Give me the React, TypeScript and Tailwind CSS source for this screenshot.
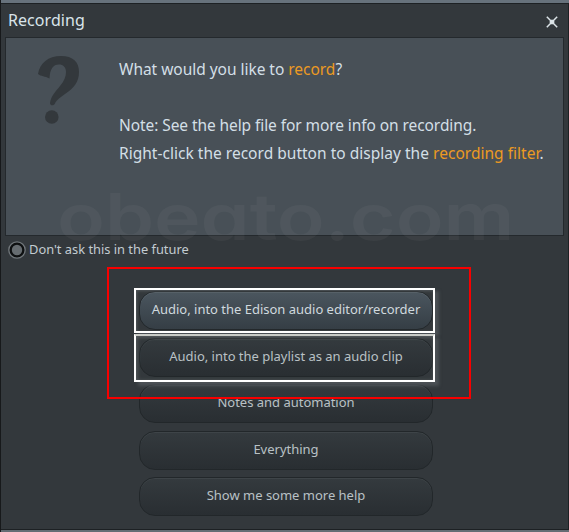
import React from "react";

const buttonBase =
  "flex h-[39px] w-[294px] shrink-0 items-center justify-center rounded-[16px] border border-[#22272a] text-[13px] leading-none";
const activeButton =
  "bg-linear-to-b from-[#4b565f] to-[#353e45] shadow-[inset_0_1px_0_#59636b] text-[#d0d9de]";
const darkButton =
  "bg-linear-to-b from-[#343a3e] to-[#292e32] shadow-[inset_0_1px_0_#3e4448] text-[#b9c1c5]";

function ActionButton({ label, active = false }: { label: string; active?: boolean }) {
  return (
    <button className={`${buttonBase} ${active ? activeButton : darkButton}`}>
      <span className="pb-[2px] tracking-[-0.01px] whitespace-nowrap">{label}</span>
    </button>
  );
}

export default function App() {
  return (
    <div className="relative flex h-[532px] w-[569px] flex-col overflow-hidden border-l border-[#17191b] bg-[#33383c] font-['Noto_Sans','Open_Sans',sans-serif]">
      <div className="h-[3px] shrink-0 bg-[#67727c]" />
      <div className="flex h-[527px] shrink-0 flex-col border-t border-r border-b border-[#1d2124]">
        <header className="flex h-[33px] shrink-0 items-center justify-between pr-[10px] pl-[7px] text-[#d9e4ea]">
          <h1 className="pb-[2px] text-[16px] leading-none tracking-[0.06px]">Recording</h1>
          <svg width="12" height="12" viewBox="0 0 12 12" className="mt-[2px]" aria-label="Close">
            <path d="M0.8 0.8 11.2 11.2M11.2 0.8 0.8 11.2" stroke="#dce4e8" strokeWidth="1.5" />
            <path d="M6 3.2 8.8 6 6 8.8 3.2 6Z" fill="#dce4e8" />
          </svg>
        </header>
        <section className="mr-[4px] ml-[4px] flex h-[199px] shrink-0 border border-[#24292d] bg-[#485057]">
          <div className="w-[113px] shrink-0 pt-[17px] pl-[31px]">
            <svg width="44" height="70" viewBox="0 0 44 70" aria-hidden="true">
              <path d="M1 19C3 8 11 1 24 1 36 1 42 7 42 17 42 27 37 33 28 39 21 44 19 46 18 48.5 17 51 13 51 13 48 14 41 19 36 23 31 27 26 29 22 29 17 29 12 26 9.500 22 9.500 16 9.500 13 14 12.500 23.500 8 21 4 21.500 1 19Z" fill="#33383c" />
              <ellipse cx="14.800" cy="62" rx="6.800" ry="6.800" fill="#33383c" />
            </svg>
          </div>
          <div className="pt-[17px] text-[15.5px] leading-[28px] whitespace-nowrap text-[#d3dfe6]">
            <p className="tracking-[-0.03px]">What would you like to <span className="text-[#ec9a22]">record</span>?</p>
            <p className="mt-[28px] tracking-[-0.08px]">Note: See the help file for more info on recording.</p>
            <p className="tracking-[0.02px]">Right-click the record button to display the <span className="text-[#ec9a22]">recording filter</span>.</p>
          </div>
        </section>
        <label className="mt-[4px] flex h-[20px] shrink-0 items-center gap-[3px] pl-[7px] text-[12.85px] leading-none text-[#c3ccd1]">
          <svg width="18" height="18" viewBox="0 0 18 18" aria-hidden="true">
            <circle cx="9" cy="9" r="8.2" fill="#0e1011" stroke="#71777b" strokeWidth="1.3" />
            <circle cx="9" cy="9" r="5.2" fill="#666c70" />
          </svg>
          <span className="pb-[2px] whitespace-nowrap">Don't ask this in the future</span>
        </label>
        <div className="flex flex-col gap-[7.5px] pt-[31px] pl-[138px]">
          <ActionButton label="Audio, into the Edison audio editor/recorder" active />
          <ActionButton label="Audio, into the playlist as an audio clip" />
          <ActionButton label="Notes and automation" />
          <ActionButton label="Everything" />
          <ActionButton label="Show me some more help" />
        </div>
      </div>
      <div className="h-[2px] shrink-0 bg-[#656d74]" />

      <div className="pointer-events-none absolute top-[190px] left-[56px] origin-left scale-x-[1.23] font-['Inter',sans-serif] text-[64px] leading-[54px] font-semibold whitespace-nowrap text-white/[0.04] [font-feature-settings:'cv11']">obeato.com</div>

      <div className="pointer-events-none absolute top-[288px] left-[133px] h-[45px] w-[301px] border-2 border-white shadow-[4px_3px_3px_#4b5054,inset_1px_1px_3px_#53585b]" />
      <div className="pointer-events-none absolute top-[334px] left-[133px] h-[48px] w-[301px] border-2 border-t-[#c9cbc7] border-white shadow-[4px_4px_3px_#4b5054,inset_1px_1px_4px_#5b6062]" />
      <div className="pointer-events-none absolute top-[267px] left-[106px] h-[132px] w-[364px] border-2 border-[#f80000]" />
    </div>
  );
}
